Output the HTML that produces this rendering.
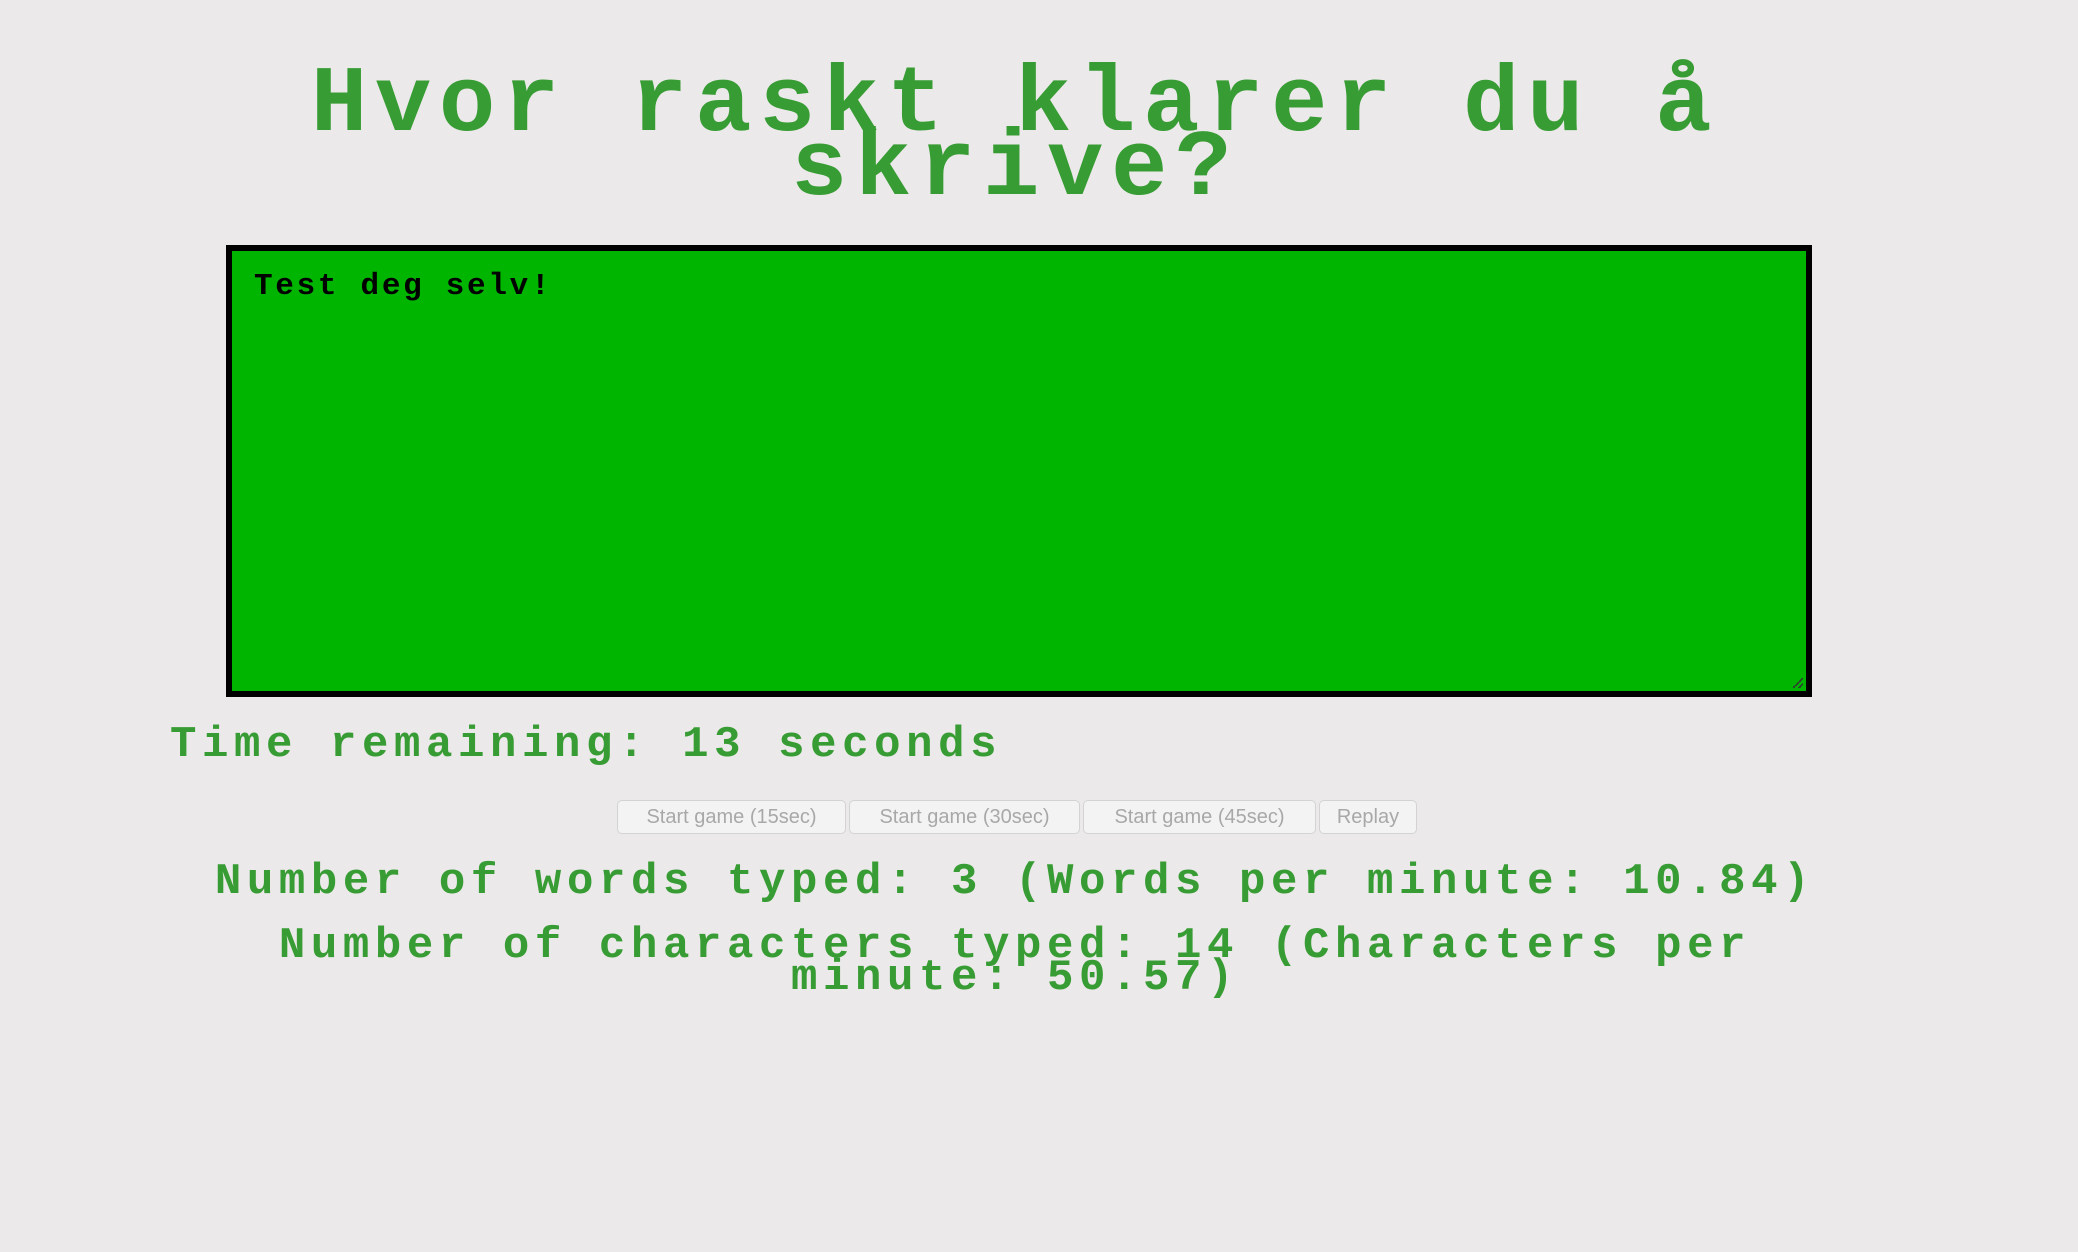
<!DOCTYPE html>
<html><head><meta charset="utf-8"><style>
body{margin:0;width:2078px;height:1252px;background:#ebe9e9;position:relative;overflow:hidden;font-family:"Liberation Mono",monospace;font-weight:bold;color:#389c34}
.c{position:absolute;left:0;width:2030px;text-align:center;white-space:nowrap}
.t{font-size:94px;letter-spacing:7.6px;line-height:64px;top:74px}
.ta{position:absolute;left:226px;top:245px;width:1574px;height:440px;border:6px solid #000;background:#00b500}
.ta span{position:absolute;left:22px;top:18px;font-size:31px;letter-spacing:2.7px;color:#000}
.ta i{position:absolute;right:3px;bottom:3px;width:10px;height:10px;background:linear-gradient(135deg,transparent 45%,#333 45%,#333 55%,transparent 55%,transparent 75%,#333 75%,#333 85%,transparent 85%)}
.time{position:absolute;left:170px;top:720px;font-size:44px;letter-spacing:5.6px}
.btns{position:absolute;top:800px;left:617px;display:flex;gap:3px}
.btns div{border:1px solid #d3d3d3;border-radius:5px;background:#f3f3f3;color:#a8a8a8;font:20px "Liberation Sans",sans-serif;line-height:32px;box-sizing:border-box;height:34px;text-align:center}
.s{font-size:44px;letter-spacing:5.6px;line-height:32px}
</style></head><body>
<div class="c t">Hvor raskt klarer du å<br>skrive?</div>
<div class="ta"><span>Test deg selv!</span><i></i></div>
<div class="time">Time remaining: 13 seconds</div>
<div class="btns"><div style="width:229px">Start game (15sec)</div><div style="width:231px">Start game (30sec)</div><div style="width:233px">Start game (45sec)</div><div style="width:98px">Replay</div></div>
<div class="c s" style="top:866px">Number of words typed: 3 (Words per minute: 10.84)</div>
<div class="c s" style="top:930px">Number of characters typed: 14 (Characters per<br>minute: 50.57)</div>
</body></html>
